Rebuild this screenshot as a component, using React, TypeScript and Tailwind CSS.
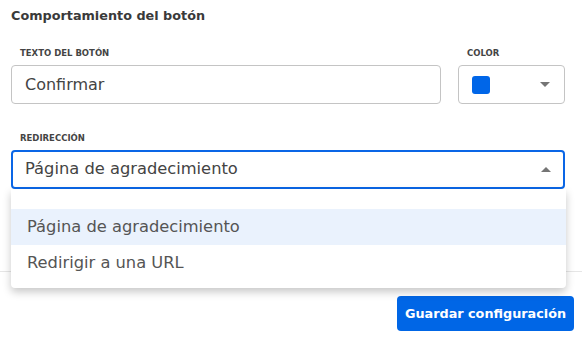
import { useState } from "react"

type Option = {
  value: string
  label: string
}

const options: Option[] = [
  { value: "thanks", label: "Página de agradecimiento" },
  { value: "url", label: "Redirigir a una URL" },
]

function Caret({ up }: { up?: boolean }) {
  return (
    <svg width="10" height="5" viewBox="0 0 10 5" className="shrink-0">
      <path d={up ? "M0 5 L5 0 L10 5 Z" : "M0 0 L5 5 L10 0 Z"} fill="#757575" />
    </svg>
  )
}

export default function App() {
  const [text, setText] = useState("Confirmar")
  const [selected] = useState("thanks")

  return (
    <div className="w-[582px] h-[341px] bg-white overflow-hidden font-['DejaVu_Sans',sans-serif] text-[#3f3f3f]">
      <div className="w-[565px] pl-[11px] pt-[7px]">
        <div className="text-[12.8px] font-bold leading-[18px] text-[#3a3a3a]">Comportamiento del botón</div>

        <div className="mt-[22px] flex gap-[17px]">
          <div className="min-w-0 flex-1">
            <div className="pl-[9px] text-[8.5px] font-bold leading-[12px] text-[#444]">TEXTO DEL BOTÓN</div>
            <input
              value={text}
              onChange={(e) => setText(e.target.value)}
              className="mt-[6px] h-[39px] w-full rounded-[4px] border border-[#c4c4c4] px-[13px] text-[16px] text-[#444] outline-none"
            />
          </div>
          <div className="w-[107px] shrink-0">
            <div className="pl-[9px] text-[8.5px] font-bold leading-[12px] text-[#444]">COLOR</div>
            <div className="mt-[6px] flex h-[39px] items-center justify-between rounded-[4px] border border-[#c4c4c4] pl-[13px] pr-[14px]">
              <div className="h-[18px] w-[18px] rounded-[3px] bg-[#0066e8]" />
              <Caret />
            </div>
          </div>
        </div>

        <div className="mt-[28px]">
          <div className="pl-[9px] text-[8.5px] font-bold leading-[12px] text-[#444]">REDIRECCIÓN</div>
          <div className="relative mt-[6px]">
            <div className="flex h-[39px] items-center justify-between rounded-[4px] border-2 border-[#0a66e6] pl-[12px] pr-[12px]">
              <span className="text-[16.3px] text-[#444]">{options.find((o) => o.value === selected)?.label}</span>
              <Caret up />
            </div>
            <div className="absolute left-0 right-[-1px] top-full z-10 rounded-b-[4px] bg-white pt-[20px] pb-[7px] shadow-[0_4px_8px_rgba(0,0,0,0.22)]">
              {options.map((o) => (
                <div
                  key={o.value}
                  className={`flex h-[36px] items-center pl-[16px] text-[16.3px] text-[#555] ${o.value === selected ? "bg-[#eaf2fd]" : ""}`}
                >
                  {o.label}
                </div>
              ))}
            </div>
          </div>
        </div>
      </div>

      <div className="mt-[82px] h-px bg-[#e6e6e6]" />

      <div className="flex justify-end pr-[8px] pt-[24px]">
        <button className="h-[35px] w-[177px] rounded-[4px] bg-[#0066e6] text-[12.8px] font-bold text-white">
          Guardar configuración
        </button>
      </div>
    </div>
  )
}
